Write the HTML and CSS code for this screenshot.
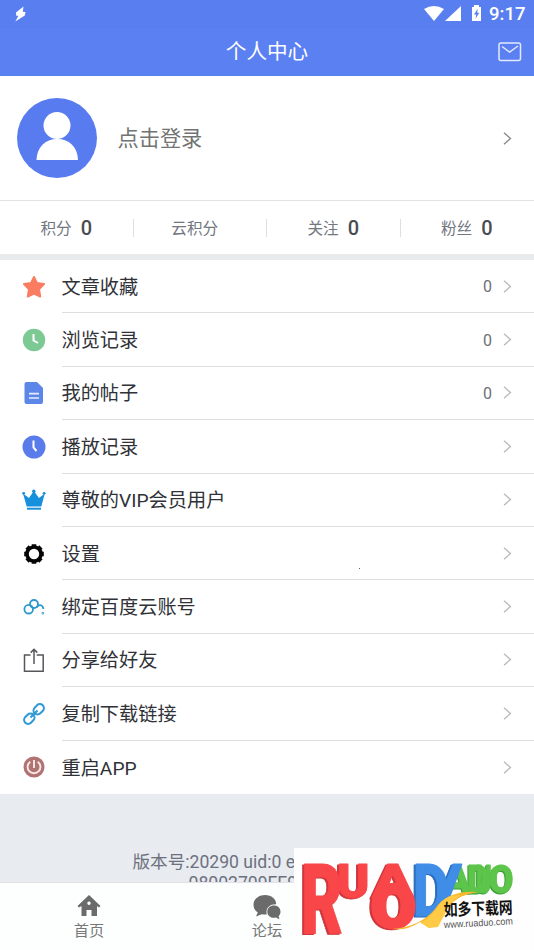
FILE: index.html
```html
<!DOCTYPE html>
<html lang="zh-CN">
<head>
<meta charset="utf-8">
<title>个人中心</title>
<link rel="stylesheet" href="styles.css">
</head>
<body>
<div class="app">
  <header class="header">
    <div class="status">
      <svg class="bolt" width="12" height="16" viewBox="0 0 12 16"><path d="M8.500.5 1 6.500 1.200 9.800 3.500 9.800.3 15.500 9.800 9.500 10.500 6 7.800 5.800z" fill="#fff"/></svg>
      <div class="status-right">
        <svg width="58" height="18" viewBox="0 0 58 18" fill="#fff"><path d="M0 5Q10-1 20 5L10 17z"/><path d="M37 2v15H21z"/><path d="M50 1h5v2h2v14h-9V3h2z"/><path d="M53.800 4.500 50 10.500h2.200l-.7 4.300 3.800-6h-2.200z" fill="#5a7ff0"/></svg>
        <span class="clock">9:17</span>
      </div>
    </div>
    <div class="titlebar">
      <span></span>
      <h1>个人中心</h1>
      <svg class="mail" width="24" height="20" viewBox="0 0 24 20" fill="none" stroke="#e3eaff" stroke-width="1.5"><rect x="1" y="1" width="21.500" height="17.500" rx="2"/><path d="m4 4.500 7.600 5.600L20 4"/></svg>
    </div>
  </header>

  <section class="profile">
    <svg width="80" height="80" viewBox="0 0 80 80"><circle cx="40" cy="40" r="40" fill="#587cf0"/><circle cx="40" cy="27.500" r="13.500" fill="#fff"/><path d="M19.500 62C20 49 28 41 40.300 41S60.500 49 61 62z" fill="#fff"/></svg>
    <span class="login">点击登录</span>
    <svg class="chev dark" width="9" height="13" viewBox="0 0 9 13"><path d="m1 .8 6.500 5.700L1 12.200"/></svg>
  </section>

  <section class="stats">
    <div class="stat"><span>积分</span><b>0</b></div>
    <div class="stat solo"><span>云积分</span></div>
    <div class="stat"><span>关注</span><b>0</b></div>
    <div class="stat"><span>粉丝</span><b>0</b></div>
  </section>

  <main class="list">
    <div class="row"><div class="icon"><svg width="24" height="24" viewBox="0 0 24 24"><path d="m12 2 2.900 6 7.100 1-5 5.200 1.200 7.300-6.200-3-6.200 3L7 14.200 2 9l7.100-1z" fill="#fb7d61" stroke="#fb7d61" stroke-width="2" stroke-linejoin="round"/></svg></div><div class="cell"><span>文章收藏</span><em>0</em><svg class="chev" width="9" height="13" viewBox="0 0 9 13"><path d="m1 .8 6.500 5.700L1 12.200"/></svg></div></div>
    <div class="row"><div class="icon"><svg width="24" height="24" viewBox="0 0 24 24"><circle cx="12" cy="12" r="11.200" fill="#7dc994"/><path d="M11.500 6v6.500L16 15" stroke="#fff" stroke-width="2" fill="none"/></svg></div><div class="cell"><span>浏览记录</span><em>0</em><svg class="chev" width="9" height="13" viewBox="0 0 9 13"><path d="m1 .8 6.500 5.700L1 12.200"/></svg></div></div>
    <div class="row"><div class="icon"><svg width="24" height="24" viewBox="0 0 24 24"><path d="M4.500 1H15l6 6v14q0 2-2 2H4.500q-2 0-2-2V3q0-2 2-2z" fill="#5c86e8"/><path d="M7 12.700h10M7 17h10" stroke="#e5edff" stroke-width="1.700"/></svg></div><div class="cell"><span>我的帖子</span><em>0</em><svg class="chev" width="9" height="13" viewBox="0 0 9 13"><path d="m1 .8 6.500 5.700L1 12.200"/></svg></div></div>
    <div class="row"><div class="icon"><svg width="24" height="24" viewBox="0 0 24 24"><circle cx="12" cy="12" r="11.500" fill="#597cea"/><path d="M11.500 5.500v7L14.500 16" stroke="#fff" stroke-width="2" fill="none"/></svg></div><div class="cell"><span>播放记录</span><svg class="chev" width="9" height="13" viewBox="0 0 9 13"><path d="m1 .8 6.500 5.700L1 12.200"/></svg></div></div>
    <div class="row"><div class="icon"><svg width="24" height="24" viewBox="0 0 24 24" fill="#168fdc"><path d="M1 5.500 7 10 11.800 3 17 10l5.800-4.500L19.300 18.500H4.700z"/><circle cx="1.700" cy="5.300" r="1.400"/><circle cx="11.800" cy="3.200" r="1.700"/><circle cx="22.100" cy="5.300" r="1.400"/><path d="M5 19.700h14v2H5z"/></svg></div><div class="cell"><span>尊敬的VIP会员用户</span><svg class="chev" width="9" height="13" viewBox="0 0 9 13"><path d="m1 .8 6.500 5.700L1 12.200"/></svg></div></div>
    <div class="row"><div class="icon"><svg width="24" height="24" viewBox="0 0 24 24" fill="none" stroke="#050505"><circle cx="12" cy="12" r="7" stroke-width="3.600"/><path d="M12 4.500V2.200M12 19.500v2.300M4.500 12H2.200M19.500 12h2.300M6.700 6.700 5 5M17.300 6.700 19 5M6.700 17.300 5 19M17.300 17.300 19 19" stroke-width="4.600"/></svg></div><div class="cell"><span>设置</span><svg class="chev" width="9" height="13" viewBox="0 0 9 13"><path d="m1 .8 6.500 5.700L1 12.200"/></svg></div></div>
    <div class="row"><div class="icon"><svg width="24" height="24" viewBox="0 0 24 24" fill="none" stroke="#2e98cc" stroke-width="1.800"><circle cx="6.700" cy="14.200" r="4.300"/><circle cx="12" cy="9" r="4"/><path d="M14.500 12.300q3.700-3.800 6-.8.800 1 .9 2.500"/><circle cx="20.800" cy="18.300" r=".4"/></svg></div><div class="cell"><span>绑定百度云账号</span><svg class="chev" width="9" height="13" viewBox="0 0 9 13"><path d="m1 .8 6.500 5.700L1 12.200"/></svg></div></div>
    <div class="row"><div class="icon"><svg width="24" height="24" viewBox="0 0 24 24" fill="none" stroke="#55575b" stroke-width="1.500"><path d="M8.500 7h-6v16.200h18.700V7h-6.500M12 16V1.500M8.700 4.600 12 1.300l3.300 3.300"/></svg></div><div class="cell"><span>分享给好友</span><svg class="chev" width="9" height="13" viewBox="0 0 9 13"><path d="m1 .8 6.500 5.700L1 12.200"/></svg></div></div>
    <div class="row"><div class="icon"><svg width="24" height="24" viewBox="0 0 24 24" fill="none" stroke="#319ad4" stroke-width="2.100"><g transform="rotate(-45 12 12)"><rect x="-.3" y="8" width="11.300" height="8" rx="4"/><rect x="13" y="8" width="11.300" height="8" rx="4"/><path d="M7 12h10"/></g></svg></div><div class="cell"><span>复制下载链接</span><svg class="chev" width="9" height="13" viewBox="0 0 9 13"><path d="m1 .8 6.500 5.700L1 12.200"/></svg></div></div>
    <div class="row"><div class="icon"><svg width="24" height="24" viewBox="0 0 24 24" fill="none"><circle cx="12" cy="12" r="10.500" fill="#b17372"/><path d="M8.300 6.700a6.400 6.400 0 1 0 7.400 0M12 5v8" stroke="#f8e9e8" stroke-width="1.900"/></svg></div><div class="cell"><span>重启APP</span><svg class="chev" width="9" height="13" viewBox="0 0 9 13"><path d="m1 .8 6.500 5.700L1 12.200"/></svg></div></div>
  </main>

  <section class="version">
    <div class="line1">版本号:20290 uid:0 e</div>
    <div class="line2">08002709FE9C</div>
  </section>

  <nav class="tabs">
    <div class="tab"><svg width="24" height="24" viewBox="0 0 24 24" fill="#6b6b6b"><path fill-rule="evenodd" d="m12 1 11.500 11-1.500 1.500-2-1.500v10h-5.500v-6h-5v6H4.500V12L2 13.500.5 12zm0 6.500a1.700 1.700 0 1 0 .01 0z"/></svg><span>首页</span></div>
    <div class="tab"><svg width="28" height="26" viewBox="0 0 28 26" fill="#6b6b6b"><path d="M12 1C5.500 1 .5 5.300.5 10.800c0 3.400 1.700 6 4.300 7.700L3 22.500l5.800-2.300c1.600.4 3.200.5 5 .3a8 8 0 0 1-.3-2.500c0-4.800 4-8 9.700-7.700C23.200 5 18.500 1 12 1z"/><path d="M21 11.500c-4 0-6.700 2.700-6.700 6.200s2.800 6.100 6.700 6.100l1.800-.2 3.700 1.700-.9-3.300c1.300-1.100 1.900-2.600 1.900-4.300 0-3.500-2.500-6.200-6.500-6.200z"/></svg><span>论坛</span></div>
    <div class="tab"></div>
  </nav>

  <i class="speck"></i>
  <div class="badge">
    <svg width="240" height="102" viewBox="0 0 240 102" class="logo">
      <g class="green"><text transform="translate(150 45) scale(1 1)" font-size="39">A</text><text transform="translate(173 45) scale(.9 1)" font-size="39">D</text><text transform="translate(182 45) scale(.62 1)" font-size="38">U</text><text transform="translate(195 45) scale(.93 1)" font-size="38">O</text></g>
      <g class="blue"><path d="m144 54 15-38h9l-14 38z"/><text transform="translate(119 68) scale(.78 1)" font-size="72">D</text></g>
      <g class="red"><text transform="translate(7 86) scale(.65 1)" font-size="99">R</text><text transform="translate(43 50)" font-size="49">U</text><text transform="translate(78 50) scale(1.250 1)" font-size="49">A</text><text class="fat" transform="translate(77 79) scale(1.080 1)" font-size="60">O</text></g>
      <path d="M98 81q28-2 43-20Q153 42 184 44q-18 2-29 14l-20 22-9-6q-13 9-28 7z" fill="#f9b82e"/>
      <path d="m155 58-11 21-9 1-8-5q12-8 20-21 8-8 20-7-7 4-12 11z" fill="#ffca45"/>
      <text class="site" transform="translate(150 68) rotate(-2) scale(1 1.220)">如多下载网</text>
      <text class="url" transform="translate(150 80) rotate(-3)" textLength="69" lengthAdjust="spacingAndGlyphs">www.ruaduo.com</text>
    </svg>
  </div>
</div>
</body>
</html>
```
FILE: styles.css
```css
* { box-sizing: border-box; }
body { margin: 0; font-family: Roboto, "Noto Sans CJK SC", sans-serif; background: #e8ebf0; }
svg { display: block; flex: none; }
.app { position: relative; width: 534px; height: 950px; overflow: hidden; display: flex; flex-direction: column; background: #e8ebf0; }
.header { height: 76px; flex: none; background: #5b80f2; color: #fff; }
.status { height: 28px; display: flex; justify-content: space-between; padding: 4px 9px 0 15px; background: #597eef; }
.bolt { margin-top: 2px; }
.status-right { display: flex; gap: 7px; }
.clock { font-size: 18.500px; line-height: 20px; font-weight: 500; width: 36px; white-space: nowrap; }
.titlebar { height: 47px; display: grid; grid-template-columns: 1fr auto 1fr; align-items: center; padding-right: 12px; padding-left: 12px; }
.titlebar h1 { margin: 0; font-size: 20.600px; font-weight: 400; line-height: 30px; }
.mail { justify-self: end; }
.profile { height: 125px; flex: none; background: #fff; border-bottom: 1px solid #e1e3e5; display: flex; align-items: center; padding: 0 22px 0 17px; }
.login { flex: 1; margin-left: 20.500px; padding-bottom: 3px; font-size: 21.200px; color: #737373; }
.chev { fill: none; stroke: #b9b9bb; stroke-width: 1.3; }
.chev.dark { stroke: #858585; }
.stats { height: 53px; flex: none; background: #fff; display: grid; grid-template-columns: repeat(4, 1fr); }
.stat { position: relative; display: flex; align-items: center; justify-content: center; gap: 9px; padding-right: 1px; color: #727781; font-size: 15.600px; }
.stat span { padding-bottom: 2px; }
.stat.solo { padding-right: 11px; }
.stat:not(:last-child) { background: linear-gradient(#dedfe2, #dedfe2) right center / 1px 18px no-repeat; }
.stat b { font-weight: 500; font-size: 20px; color: #4a4c51; }
.list { height: 539.500px; flex: none; border-top: 6px solid #e9eaec; background: #fff; }
.row { height: 53.400px; display: flex; }
.icon { width: 61.500px; padding-left: 21.500px; display: flex; align-items: center; }
.cell { flex: 1; display: flex; align-items: center; padding-right: 22px; border-bottom: 1px solid #dddfe1; color: #303238; font-size: 19.200px; }
.row:last-child .cell { border-bottom: 0; }
.cell span { flex: 1; padding-bottom: 1px; }
.cell em { font-style: normal; font-size: 16px; color: #6d7177; margin-right: 11px; padding-top: 1px; }
.version { flex: 1; min-height: 0; overflow: hidden; padding-top: 57.500px; font-size: 17.600px; line-height: 23px; color: #6d717e; white-space: nowrap; }
.line1 { padding-left: 132.500px; }
.line2 { padding-left: 188.500px; line-height: 19px; }
.tabs { height: 68px; flex: none; border-top: 1px solid #dfe1e4; background: #fdfefe; display: grid; grid-template-columns: repeat(3, 1fr); }
.tab { display: flex; flex-direction: column; align-items: center; justify-content: space-between; padding: 11px 0 9px; height: 67px; color: #787878; font-size: 15.200px; line-height: 20px; }
.speck { position: absolute; left: 359px; top: 568px; width: 1px; height: 1px; background: #2c7888; }
.badge { position: absolute; left: 294px; top: 848px; width: 240px; height: 102px; background: #fefefe; }
.logo { font-family: Roboto, sans-serif; font-weight: 900; stroke-linejoin: round; }
.red { fill: #f84649; stroke: #f84649; stroke-width: 1; filter: drop-shadow(-2px 1px 0 #cf353a); }
.fat { stroke-width: 3.5; }
.blue { fill: #3f8de6; stroke: #3f8de6; filter: drop-shadow(-2px 1px 0 #286dbd); }
.green { fill: #5cc54a; stroke: #5cc54a; filter: drop-shadow(-1px 1px 0 #389938); }
.site { font: 700 13.800px "Noto Sans CJK SC", sans-serif; fill: #111; }
.url { font: 400 9.800px "Liberation Sans", sans-serif; fill: #555; }
```
